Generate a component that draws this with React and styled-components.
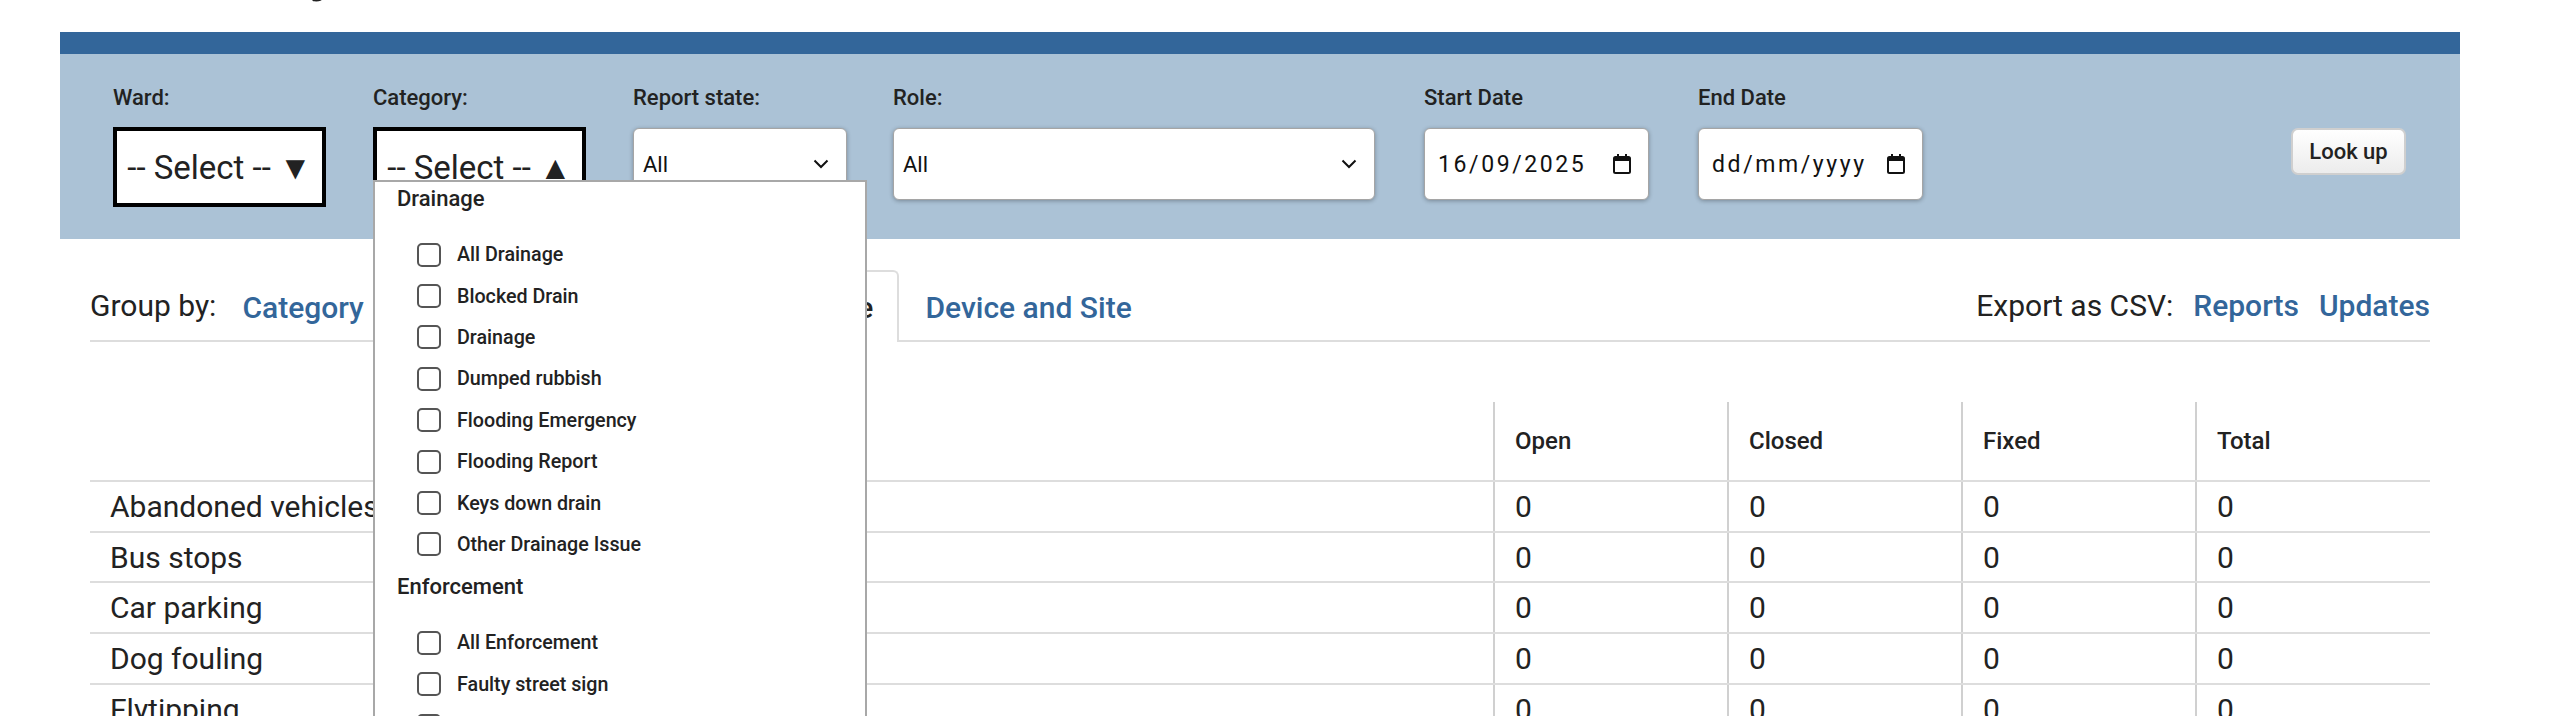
import styled, { createGlobalStyle } from 'styled-components';

const GlobalStyle = createGlobalStyle`
  body {
    margin: 0;
    font-family: Roboto, "Liberation Sans", sans-serif;
    color: #222;
    background: #fff;
    overflow: hidden;
  }
`;

const drainage = [
  'All Drainage',
  'Blocked Drain',
  'Drainage',
  'Dumped rubbish',
  'Flooding Emergency',
  'Flooding Report',
  'Keys down drain',
  'Other Drainage Issue',
];

const enforcement = ['All Enforcement', 'Faulty street sign', 'Highways Enforcement'];

const rows = ['Abandoned vehicles', 'Bus stops', 'Car parking', 'Dog fouling', 'Flytipping'];

const tabs = ['Category', 'Ward', 'Month', 'Team', 'State', 'Device and Site'];

function Chevron() {
  return (
    <svg width="16" height="10" viewBox="0 0 16 10">
      <path d="M1.5 1.5 L8 8 L14.5 1.5" fill="none" stroke="#111" strokeWidth="2" />
    </svg>
  );
}

function CalendarIcon() {
  return (
    <svg width="18" height="20" viewBox="0 0 18 20">
      <rect x="1" y="3" width="16" height="16" rx="1.5" fill="none" stroke="#111" strokeWidth="2" />
      <rect x="1" y="3" width="16" height="4" fill="#111" />
      <rect x="4" y="0" width="2" height="4" fill="#111" />
      <rect x="12" y="0" width="2" height="4" fill="#111" />
    </svg>
  );
}

function App() {
  return (
    <>
      <GlobalStyle />
      <Page>
        <Title>Summary</Title>
        <FilterPanel>
          <Field width="260px">
            <Label>Ward:</Label>
            <FakeSelect>-- Select -- ▼</FakeSelect>
          </Field>
          <Field width="260px">
            <Label>Category:</Label>
            <FakeSelect>-- Select -- ▲</FakeSelect>
            <Dropdown>
              <Group>
                <GroupHeading>Drainage</GroupHeading>
                {drainage.map((item) => (
                  <Option key={item}>
                    <CheckBox />
                    {item}
                  </Option>
                ))}
              </Group>
              <Group>
                <GroupHeading>Enforcement</GroupHeading>
                {enforcement.map((item) => (
                  <Option key={item}>
                    <CheckBox />
                    {item}
                  </Option>
                ))}
              </Group>
            </Dropdown>
          </Field>
          <Field width="260px">
            <Label>Report state:</Label>
            <Select width="214px">
              All
              <Chevron />
            </Select>
          </Field>
          <Field width="531px">
            <Label>Role:</Label>
            <Select width="482px">
              All
              <Chevron />
            </Select>
          </Field>
          <Field width="274px">
            <Label>Start Date</Label>
            <DateBox>
              16/09/2025
              <CalendarIcon />
            </DateBox>
          </Field>
          <Field width="226px">
            <Label>End Date</Label>
            <DateBox>
              dd/mm/yyyy
              <CalendarIcon />
            </DateBox>
          </Field>
          <LookUp>Look up</LookUp>
        </FilterPanel>

        <Content>
          <TabBar>
            <GroupLabel>Group by:</GroupLabel>
            {tabs.map((tab) => (
              <Tab key={tab} active={tab === 'State'}>
                {tab}
              </Tab>
            ))}
            <Export>
              Export as CSV:
              <ExportLink>Reports</ExportLink>
              <ExportLink>Updates</ExportLink>
            </Export>
          </TabBar>

          <Table>
            <thead>
              <tr>
                <Th></Th>
                <Th>Open</Th>
                <Th>Closed</Th>
                <Th>Fixed</Th>
                <Th>Total</Th>
              </tr>
            </thead>
            <tbody>
              {rows.map((name) => (
                <tr key={name}>
                  <Td>{name}</Td>
                  <Td>0</Td>
                  <Td>0</Td>
                  <Td>0</Td>
                  <Td>0</Td>
                </tr>
              ))}
            </tbody>
          </Table>
        </Content>
      </Page>
    </>
  );
}

export default App;

const Page = styled.div`
  width: 2400px;
  margin-left: 60px;
`;

const Title = styled.h1`
  margin: -57px 0 37px 20px;
  font-size: 60px;
  line-height: 52px;
  height: 52px;
  font-weight: 700;
`;

const FilterPanel = styled.div`
  display: flex;
  align-items: flex-start;
  box-sizing: border-box;
  height: 207px;
  padding: 31px 54px 0 53px;
  border-top: 22px solid #33669a;
  background: #abc2d6;
`;

const Field = styled.div`
  position: relative;
  display: flex;
  flex-direction: column;
  width: ${({ width }) => width};
  flex-shrink: 0;
`;

const Label = styled.label`
  font-size: 22px;
  font-weight: 500;
  line-height: 26px;
  margin-bottom: 16px;
`;

const FakeSelect = styled.div`
  box-sizing: border-box;
  width: 213px;
  height: 80px;
  border: 4px solid #000;
  background: #fff;
  display: flex;
  align-items: center;
  justify-content: center;
  font-size: 33px;
  color: #222;
`;

const Select = styled.div`
  box-sizing: border-box;
  width: ${({ width }) => width};
  height: 72px;
  margin-top: 1px;
  padding: 0 17px 0 9px;
  display: flex;
  align-items: center;
  justify-content: space-between;
  background: #fff;
  border: 1px solid #a5a5a5;
  border-radius: 6px;
  box-shadow: 0 1px 4px rgba(0, 0, 0, 0.3);
  font-size: 22px;
  color: #111;
`;

const DateBox = styled(Select)`
  width: 225px;
  padding: 0 17px 0 13px;
  font-size: 23px;
  letter-spacing: 2.6px;
`;

const Dropdown = styled.div`
  position: absolute;
  top: 95px;
  left: 0;
  width: 494px;
  height: 620px;
  box-sizing: border-box;
  padding: 4px 0 0 22px;
  background: #fff;
  border: 2px solid #a8a8a8;
  z-index: 5;
`;

const Group = styled.div`
  display: flex;
  flex-direction: column;
  & + & {
    margin-top: 9px;
  }
`;

const GroupHeading = styled.div`
  font-size: 22px;
  font-weight: 500;
  line-height: 26px;
  margin-bottom: 22px;
  color: #222;
`;

const Option = styled.label`
  display: flex;
  align-items: center;
  gap: 16px;
  height: 41.4px;
  padding-left: 20px;
  font-size: 19.7px;
  font-weight: 500;
  color: #222;
`;

const CheckBox = styled.span`
  width: 24px;
  height: 24px;
  box-sizing: border-box;
  border: 2px solid #555;
  border-radius: 5px;
  background: #fff;
`;

const LookUp = styled.button`
  margin: 43px 0 0 auto;
  width: 115px;
  height: 47px;
  border: 2px solid #cfcfcf;
  border-radius: 7px;
  background: linear-gradient(#ffffff, #ececec);
  font-family: Roboto, "Liberation Sans", sans-serif;
  font-size: 22px;
  font-weight: 500;
  color: #222;
`;

const Content = styled.div`
  padding: 31px 30px 0;
`;

const TabBar = styled.div`
  display: flex;
  align-items: stretch;
  height: 70px;
  border-bottom: 2px solid #ddd;
  font-size: 30px;
`;

const GroupLabel = styled.span`
  display: flex;
  align-items: center;
`;

const Tab = styled.a`
  display: flex;
  align-items: center;
  padding: 0 24px;
  margin-bottom: -2px;
  font-weight: 500;
  color: ${({ active }) => (active ? '#222' : '#33669a')};
  background: ${({ active }) => (active ? '#fff' : 'transparent')};
  border: 2px solid ${({ active }) => (active ? '#ddd' : 'transparent')};
  border-bottom: none;
  border-radius: 6px 6px 0 0;
`;

const Export = styled.div`
  margin-left: auto;
  display: flex;
  align-items: center;
  gap: 20px;
`;

const ExportLink = styled.a`
  color: #33669a;
  font-weight: 500;
`;

const Table = styled.table`
  width: 100%;
  margin-top: 60px;
  border-collapse: collapse;
  table-layout: fixed;
`;

const Th = styled.th`
  height: 78px;
  padding: 0 20px;
  text-align: left;
  font-size: 24px;
  font-weight: 500;
  border-bottom: 2px solid #ddd;
  &:first-child {
    width: 1363px;
  }
  & + & {
    border-left: 2px solid #d0d0d0;
  }
`;

const Td = styled.td`
  height: 48.7px;
  padding: 0 20px;
  font-size: 30px;
  border-bottom: 2px solid #ddd;
  & + & {
    border-left: 2px solid #d0d0d0;
  }
`;
